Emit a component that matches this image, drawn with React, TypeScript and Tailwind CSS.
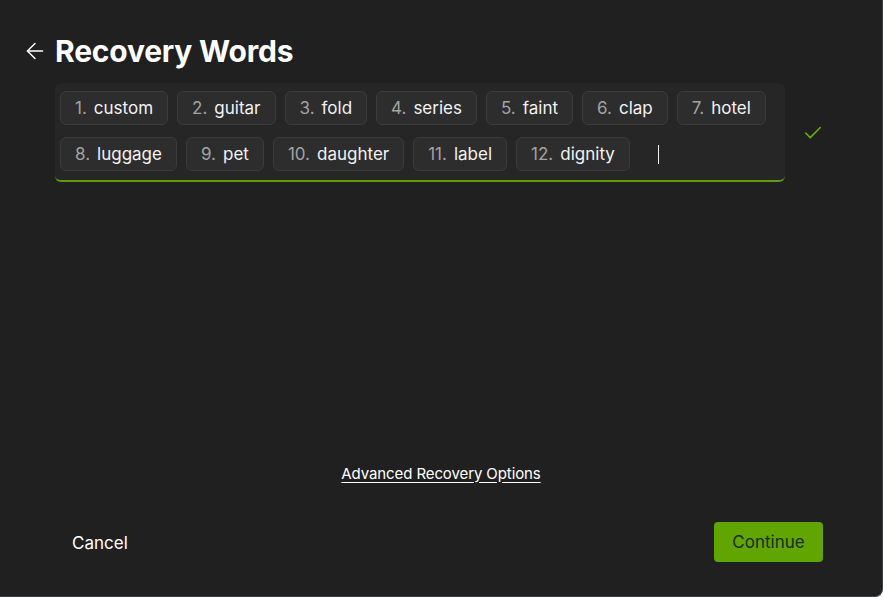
import { ArrowLeft, Check } from 'lucide-react';

const words = ['custom', 'guitar', 'fold', 'series', 'faint', 'clap', 'hotel', 'luggage', 'pet', 'daughter', 'label', 'dignity'];

function Chip({ n, word }: { n: number; word: string }) {
  return (
    <div className="h-[34px] flex items-center px-[14px] rounded-[6px] bg-[#2d2d2d] border border-[#3b3b3b] text-[17px] leading-none whitespace-nowrap">
      <span className="text-[#a3a3a3]">{n}.</span>
      <span className="text-[#f2f2f2] ml-[7px]">{word}</span>
    </div>
  );
}

export default function App() {
  return (
    <div
      className="w-[883px] h-[597px] bg-[#202020] text-white rounded-br-[8px] border-r border-b border-[#3a3d40] flex flex-col overflow-hidden"
      style={{ fontFamily: 'Inter, "Noto Sans", sans-serif' }}
    >
      <div className="flex items-center pl-[22px] pt-[33px] gap-[7px]">
        <ArrowLeft size={26} strokeWidth={1.3} className="text-white" />
        <h1 className="text-[30px] font-bold leading-[36px] tracking-[-0.2px]">Recovery Words</h1>
      </div>

      <div className="flex items-center ml-[55px] mt-[14px]">
        <div className="w-[730px] bg-[#262626] rounded-[6px] border-b-2 border-[#5c9e05] pl-[5px] pr-[8px] pt-[8px] pb-[9px]">
          <div className="flex flex-wrap gap-x-[9px] gap-y-[12px]">
            {words.map((w, i) => (
              <Chip key={w} n={i + 1} word={w} />
            ))}
            <div className="h-[34px] flex items-center pl-[19px]">
              <div className="w-[1.5px] h-[19px] bg-[#f0f0f0]" />
            </div>
          </div>
        </div>
        <Check size={22} strokeWidth={1.7} className="text-[#68b00a] ml-[17px]" />
      </div>

      <div className="flex-1" />

      <div className="flex justify-center">
        <button className="text-[15px] text-white underline underline-offset-[3px] tracking-[-0.1px]">Advanced Recovery Options</button>
      </div>

      <div className="flex items-center justify-between pl-[72px] pr-[59px] mt-[37px] mb-[34px]">
        <button className="text-[17px] text-white pt-[3px]">Cancel</button>
        <button className="h-[40px] w-[109px] rounded-[4px] bg-[#60a500] text-[#1b2b06] text-[17px] pt-[2px]">Continue</button>
      </div>
    </div>
  );
}
